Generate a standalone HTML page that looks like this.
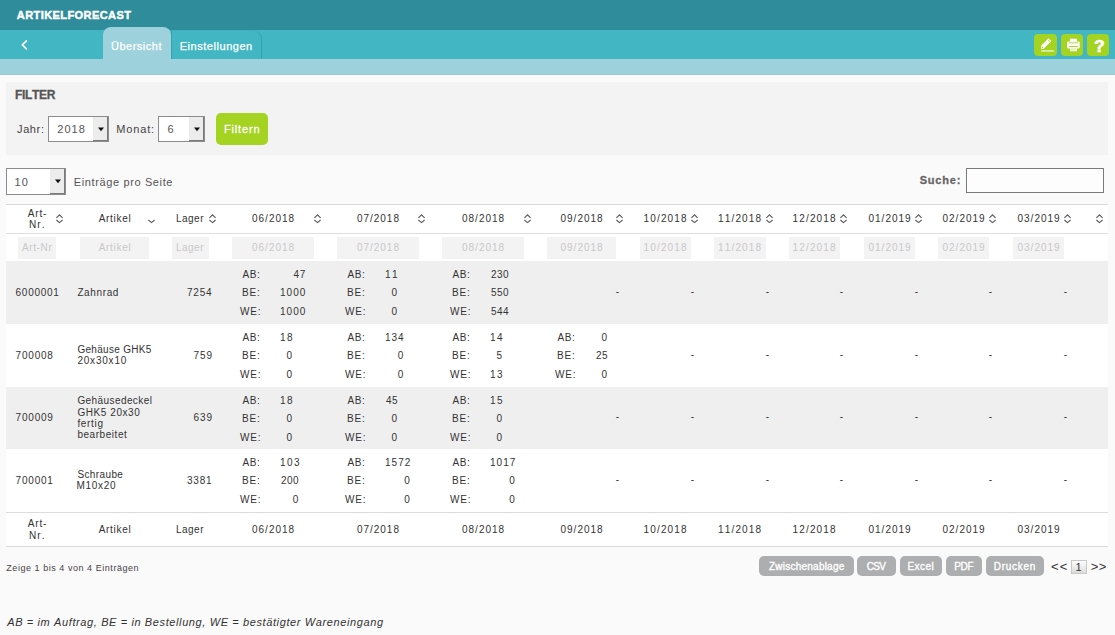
<!DOCTYPE html>
<html><head><meta charset="utf-8"><style>
html,body{margin:0;padding:0}
body{width:1115px;height:635px;overflow:hidden;position:relative;background:#fafafa;font-family:'Liberation Sans', sans-serif}
.t{position:absolute;white-space:pre;line-height:normal;font-kerning:none}
</style></head><body>
<div style="position:absolute;left:0px;top:0px;width:1115px;height:30px;background:#2f8c9a"></div>
<div style="position:absolute;left:0px;top:30px;width:1115px;height:29px;background:#42b6c3"></div>
<div style="position:absolute;left:0px;top:59px;width:1115px;height:16px;background:#9dd1dc"></div>
<div style="position:absolute;left:0px;top:74px;width:1115px;height:1px;background:#93ccd7"></div>
<div style="position:absolute;left:0px;top:75px;width:1115px;height:1px;background:#fff"></div>
<svg style="position:absolute;left:0;top:0" width="60" height="60"><polyline points="26.4,40.9 22.3,44.9 26.4,48.9" fill="none" stroke="#fff" stroke-width="1.6" stroke-linecap="round" stroke-linejoin="round"/></svg>
<div style="position:absolute;left:171px;top:30px;width:91px;height:29px;background:#42b6c3;border:1px solid #38a0ac;border-bottom:none;border-top-color:#3fb0bd;border-radius:0 9px 0 0;box-sizing:border-box"></div>
<div style="position:absolute;left:103px;top:27px;width:68px;height:32px;background:#9dd1dc;border-radius:8px 8px 0 0"></div>
<div style="position:absolute;left:1034px;top:34px;width:23px;height:22px;background:#a4d321;border-radius:4px"></div>
<div style="position:absolute;left:1061px;top:34px;width:22px;height:22px;background:#a4d321;border-radius:4px"></div>
<div style="position:absolute;left:1087px;top:34px;width:22px;height:22px;background:#a4d321;border-radius:4px"></div>
<svg style="position:absolute;left:1034px;top:34px" width="23" height="22"><path d="M7.1,11.8 L14.5,4.3 L17.3,6.9 L9.7,14.7 L7.1,14.9 Z" fill="#fff"/><circle cx="8.4" cy="13.5" r="0.75" fill="#a4d321"/><path d="M14.0,6.0 L15.9,7.7" stroke="#a4d321" stroke-width="0.8"/><rect x="7.1" y="16" width="12.8" height="1.8" fill="#fff" opacity="0.6"/></svg>
<svg style="position:absolute;left:1061px;top:34px" width="22" height="22"><rect x="9.1" y="4.7" width="6.9" height="3.6" fill="#fff"/><rect x="6.2" y="7.4" width="12.5" height="7.2" rx="1" fill="#fff"/><rect x="8.0" y="8.4" width="9" height="0.9" fill="#a4d321"/><rect x="8.2" y="12.0" width="8.6" height="1.0" fill="#a4d321"/><rect x="9.1" y="13.0" width="6.9" height="4.3" fill="#fff"/><rect x="9.8" y="14.2" width="5.5" height="2.4" fill="#a4d321" opacity="0.3"/></svg>
<div style="position:absolute;left:6px;top:82px;width:1102px;height:73px;background:#f3f3f3"></div>
<div style="position:absolute;left:48px;top:116px;width:61px;height:26px;background:#fff;border:1px solid #8c8c8c;box-sizing:border-box"></div>
<div style="position:absolute;left:93px;top:117px;width:15px;height:24px;background:#ececec;border-right:1px solid #7a7a7a;border-bottom:1px solid #7a7a7a;box-sizing:border-box"></div>
<svg style="position:absolute;left:96.5px;top:124.5px" width="8" height="8"><polygon points="1,2.6 7,2.6 4,6.2" fill="#111"/></svg>
<div style="position:absolute;left:158px;top:116px;width:47px;height:26px;background:#fff;border:1px solid #8c8c8c;box-sizing:border-box"></div>
<div style="position:absolute;left:189px;top:117px;width:15px;height:24px;background:#ececec;border-right:1px solid #7a7a7a;border-bottom:1px solid #7a7a7a;box-sizing:border-box"></div>
<svg style="position:absolute;left:192.5px;top:124.5px" width="8" height="8"><polygon points="1,2.6 7,2.6 4,6.2" fill="#111"/></svg>
<div style="position:absolute;left:216px;top:113px;width:52px;height:32px;background:#a4d321;border-radius:5px"></div>
<div style="position:absolute;left:6px;top:168px;width:60px;height:27px;background:#fff;border:1px solid #8c8c8c;box-sizing:border-box"></div>
<div style="position:absolute;left:50px;top:169px;width:15px;height:25px;background:#ececec;border-right:1px solid #7a7a7a;border-bottom:1px solid #7a7a7a;box-sizing:border-box"></div>
<svg style="position:absolute;left:53.5px;top:177.0px" width="8" height="8"><polygon points="1,2.6 7,2.6 4,6.2" fill="#111"/></svg>
<div style="position:absolute;left:966px;top:168px;width:138px;height:24.5px;background:#fdfdfd;border:1px solid #7a7a7a;box-sizing:border-box"></div>
<div style="position:absolute;left:6px;top:204px;width:1102px;height:343px;background:#fff"></div>
<div style="position:absolute;left:6px;top:204px;width:1102px;height:1px;background:#d9d9d9"></div>
<div style="position:absolute;left:6px;top:233px;width:1102px;height:1px;background:#dedede"></div>
<svg style="position:absolute;left:54.5px;top:212px" width="9" height="13"><polyline points="1.4,5.9 4.5,2.9 7.6,5.9" fill="none" stroke="#5a5a5a" stroke-width="1.15"/><polyline points="1.4,8.0 4.5,10.6 7.6,8.0" fill="none" stroke="#5a5a5a" stroke-width="1.15"/></svg>
<div style="position:absolute;left:18px;top:237px;width:38px;height:22px;background:#f3f3f3"></div>
<div style="position:absolute;left:18px;top:237px;width:38px;height:22px;overflow:hidden"></div>
<svg style="position:absolute;left:147.29999999999998px;top:212px" width="9" height="13"><polyline points="1.4,8.0 4.5,10.6 7.6,8.0" fill="none" stroke="#5a5a5a" stroke-width="1.15"/></svg>
<div style="position:absolute;left:80px;top:237px;width:69px;height:22px;background:#f3f3f3"></div>
<div style="position:absolute;left:80px;top:237px;width:69px;height:22px;overflow:hidden"></div>
<svg style="position:absolute;left:207.7px;top:212px" width="9" height="13"><polyline points="1.4,5.9 4.5,2.9 7.6,5.9" fill="none" stroke="#5a5a5a" stroke-width="1.15"/><polyline points="1.4,8.0 4.5,10.6 7.6,8.0" fill="none" stroke="#5a5a5a" stroke-width="1.15"/></svg>
<div style="position:absolute;left:172px;top:237px;width:37px;height:22px;background:#f3f3f3"></div>
<div style="position:absolute;left:172px;top:237px;width:37px;height:22px;overflow:hidden"></div>
<svg style="position:absolute;left:312.7px;top:212px" width="9" height="13"><polyline points="1.4,5.9 4.5,2.9 7.6,5.9" fill="none" stroke="#5a5a5a" stroke-width="1.15"/><polyline points="1.4,8.0 4.5,10.6 7.6,8.0" fill="none" stroke="#5a5a5a" stroke-width="1.15"/></svg>
<div style="position:absolute;left:232px;top:237px;width:82px;height:22px;background:#f3f3f3"></div>
<div style="position:absolute;left:232px;top:237px;width:82px;height:22px;overflow:hidden"></div>
<svg style="position:absolute;left:417.4px;top:212px" width="9" height="13"><polyline points="1.4,5.9 4.5,2.9 7.6,5.9" fill="none" stroke="#5a5a5a" stroke-width="1.15"/><polyline points="1.4,8.0 4.5,10.6 7.6,8.0" fill="none" stroke="#5a5a5a" stroke-width="1.15"/></svg>
<div style="position:absolute;left:337px;top:237px;width:82px;height:22px;background:#f3f3f3"></div>
<div style="position:absolute;left:337px;top:237px;width:82px;height:22px;overflow:hidden"></div>
<svg style="position:absolute;left:522.7px;top:212px" width="9" height="13"><polyline points="1.4,5.9 4.5,2.9 7.6,5.9" fill="none" stroke="#5a5a5a" stroke-width="1.15"/><polyline points="1.4,8.0 4.5,10.6 7.6,8.0" fill="none" stroke="#5a5a5a" stroke-width="1.15"/></svg>
<div style="position:absolute;left:442px;top:237px;width:82px;height:22px;background:#f3f3f3"></div>
<div style="position:absolute;left:442px;top:237px;width:82px;height:22px;overflow:hidden"></div>
<svg style="position:absolute;left:614.7px;top:212px" width="9" height="13"><polyline points="1.4,5.9 4.5,2.9 7.6,5.9" fill="none" stroke="#5a5a5a" stroke-width="1.15"/><polyline points="1.4,8.0 4.5,10.6 7.6,8.0" fill="none" stroke="#5a5a5a" stroke-width="1.15"/></svg>
<div style="position:absolute;left:547px;top:237px;width:69px;height:22px;background:#f3f3f3"></div>
<div style="position:absolute;left:547px;top:237px;width:69px;height:22px;overflow:hidden"></div>
<svg style="position:absolute;left:689.7px;top:212px" width="9" height="13"><polyline points="1.4,5.9 4.5,2.9 7.6,5.9" fill="none" stroke="#5a5a5a" stroke-width="1.15"/><polyline points="1.4,8.0 4.5,10.6 7.6,8.0" fill="none" stroke="#5a5a5a" stroke-width="1.15"/></svg>
<div style="position:absolute;left:640px;top:237px;width:51px;height:22px;background:#f3f3f3"></div>
<div style="position:absolute;left:640px;top:237px;width:51px;height:22px;overflow:hidden"></div>
<svg style="position:absolute;left:764.7px;top:212px" width="9" height="13"><polyline points="1.4,5.9 4.5,2.9 7.6,5.9" fill="none" stroke="#5a5a5a" stroke-width="1.15"/><polyline points="1.4,8.0 4.5,10.6 7.6,8.0" fill="none" stroke="#5a5a5a" stroke-width="1.15"/></svg>
<div style="position:absolute;left:714px;top:237px;width:52px;height:22px;background:#f3f3f3"></div>
<div style="position:absolute;left:714px;top:237px;width:52px;height:22px;overflow:hidden"></div>
<svg style="position:absolute;left:838.7px;top:212px" width="9" height="13"><polyline points="1.4,5.9 4.5,2.9 7.6,5.9" fill="none" stroke="#5a5a5a" stroke-width="1.15"/><polyline points="1.4,8.0 4.5,10.6 7.6,8.0" fill="none" stroke="#5a5a5a" stroke-width="1.15"/></svg>
<div style="position:absolute;left:789px;top:237px;width:51px;height:22px;background:#f3f3f3"></div>
<div style="position:absolute;left:789px;top:237px;width:51px;height:22px;overflow:hidden"></div>
<svg style="position:absolute;left:913.7px;top:212px" width="9" height="13"><polyline points="1.4,5.9 4.5,2.9 7.6,5.9" fill="none" stroke="#5a5a5a" stroke-width="1.15"/><polyline points="1.4,8.0 4.5,10.6 7.6,8.0" fill="none" stroke="#5a5a5a" stroke-width="1.15"/></svg>
<div style="position:absolute;left:864px;top:237px;width:51px;height:22px;background:#f3f3f3"></div>
<div style="position:absolute;left:864px;top:237px;width:51px;height:22px;overflow:hidden"></div>
<svg style="position:absolute;left:987.7px;top:212px" width="9" height="13"><polyline points="1.4,5.9 4.5,2.9 7.6,5.9" fill="none" stroke="#5a5a5a" stroke-width="1.15"/><polyline points="1.4,8.0 4.5,10.6 7.6,8.0" fill="none" stroke="#5a5a5a" stroke-width="1.15"/></svg>
<div style="position:absolute;left:938px;top:237px;width:51px;height:22px;background:#f3f3f3"></div>
<div style="position:absolute;left:938px;top:237px;width:51px;height:22px;overflow:hidden"></div>
<svg style="position:absolute;left:1062.7px;top:212px" width="9" height="13"><polyline points="1.4,5.9 4.5,2.9 7.6,5.9" fill="none" stroke="#5a5a5a" stroke-width="1.15"/><polyline points="1.4,8.0 4.5,10.6 7.6,8.0" fill="none" stroke="#5a5a5a" stroke-width="1.15"/></svg>
<div style="position:absolute;left:1013px;top:237px;width:51px;height:22px;background:#f3f3f3"></div>
<div style="position:absolute;left:1013px;top:237px;width:51px;height:22px;overflow:hidden"></div>
<svg style="position:absolute;left:1094.7px;top:212px" width="9" height="13"><polyline points="1.4,5.9 4.5,2.9 7.6,5.9" fill="none" stroke="#5a5a5a" stroke-width="1.15"/><polyline points="1.4,8.0 4.5,10.6 7.6,8.0" fill="none" stroke="#5a5a5a" stroke-width="1.15"/></svg>
<div style="position:absolute;left:6px;top:261px;width:1102px;height:63px;background:#efefef"></div>
<div style="position:absolute;left:6px;top:387px;width:1102px;height:62px;background:#efefef"></div>
<div style="position:absolute;left:6px;top:512px;width:1102px;height:1px;background:#dcdcdc"></div>
<div style="position:absolute;left:6px;top:546px;width:1102px;height:1px;background:#dcdcdc"></div>
<div style="position:absolute;left:759px;top:556px;width:95px;height:20px;background:#adaeaf;border-radius:5px"></div>
<div style="position:absolute;left:857px;top:556px;width:39px;height:20px;background:#adaeaf;border-radius:5px"></div>
<div style="position:absolute;left:899.6px;top:556px;width:42.39999999999998px;height:20px;background:#adaeaf;border-radius:5px"></div>
<div style="position:absolute;left:946.4px;top:556px;width:36.0px;height:20px;background:#adaeaf;border-radius:5px"></div>
<div style="position:absolute;left:986.3px;top:556px;width:57.299999999999955px;height:20px;background:#adaeaf;border-radius:5px"></div>
<div style="position:absolute;left:1071px;top:560px;width:16px;height:14px;background:linear-gradient(#fdfdfd,#dcdcdc);border:1px solid #c8c8c8;box-sizing:border-box"></div>
<div class="t" style="left:16.80px;top:8.70px;font-size:11px;letter-spacing:0.429px;color:#fff;font-weight:700;-webkit-text-stroke:0.45px #fff">ARTIKELFORECAST</div>
<div class="t" style="left:111.00px;top:40.00px;font-size:11px;letter-spacing:0.500px;color:#fff;-webkit-text-stroke:0.25px #fff">Übersicht</div>
<div class="t" style="left:179.70px;top:39.80px;font-size:11px;letter-spacing:0.542px;color:#fff;-webkit-text-stroke:0.25px #fff">Einstellungen</div>
<div class="t" style="left:1094.20px;top:36.70px;font-size:17px;letter-spacing:0.000px;color:#fff;font-weight:700;-webkit-text-stroke:0.7px #fff">?</div>
<div class="t" style="left:14.90px;top:88.00px;font-size:12px;letter-spacing:-0.300px;color:#555;font-weight:700;-webkit-text-stroke:0.3px #555">FILTER</div>
<div class="t" style="left:17.00px;top:122.70px;font-size:11px;letter-spacing:0.625px;color:#444">Jahr:</div>
<div class="t" style="left:116.30px;top:122.70px;font-size:11px;letter-spacing:0.840px;color:#444">Monat:</div>
<div class="t" style="left:57.30px;top:122.70px;font-size:11px;letter-spacing:1.000px;color:#555">2018</div>
<div class="t" style="left:167.60px;top:122.70px;font-size:11px;letter-spacing:0.000px;color:#555">6</div>
<div class="t" style="left:224.00px;top:123.00px;font-size:11px;letter-spacing:0.833px;color:#fff;-webkit-text-stroke:0.3px #fff">Filtern</div>
<div class="t" style="left:14.60px;top:176.00px;font-size:11px;letter-spacing:1.000px;color:#555">10</div>
<div class="t" style="left:73.80px;top:176.00px;font-size:11px;letter-spacing:0.624px;color:#555">Einträge pro Seite</div>
<div class="t" style="left:919.70px;top:174.10px;font-size:11px;letter-spacing:0.800px;color:#666;font-weight:700;-webkit-text-stroke:0.3px #666">Suche:</div>
<div class="t" style="left:27.78px;top:208.00px;font-size:10px;letter-spacing:0.813px;color:#333">Art-</div>
<div class="t" style="left:28.91px;top:218.80px;font-size:10px;letter-spacing:1.088px;color:#333">Nr.</div>
<div class="t" style="left:27.78px;top:517.90px;font-size:10px;letter-spacing:0.813px;color:#333">Art-</div>
<div class="t" style="left:28.91px;top:529.70px;font-size:10px;letter-spacing:1.088px;color:#333">Nr.</div>
<div class="t" style="left:21.91px;top:241.60px;font-size:10px;letter-spacing:0.635px;color:#c8c8c8">Art-Nr</div>
<div class="t" style="left:98.77px;top:213.00px;font-size:10px;letter-spacing:0.676px;color:#333">Artikel</div>
<div class="t" style="left:98.77px;top:523.80px;font-size:10px;letter-spacing:0.676px;color:#333">Artikel</div>
<div class="t" style="left:98.77px;top:241.60px;font-size:10px;letter-spacing:0.676px;color:#c8c8c8">Artikel</div>
<div class="t" style="left:176.09px;top:213.00px;font-size:10px;letter-spacing:0.453px;color:#333">Lager</div>
<div class="t" style="left:176.09px;top:523.80px;font-size:10px;letter-spacing:0.453px;color:#333">Lager</div>
<div class="t" style="left:176.09px;top:241.60px;font-size:10px;letter-spacing:0.453px;color:#c8c8c8">Lager</div>
<div class="t" style="left:252.03px;top:213.00px;font-size:10px;letter-spacing:0.991px;color:#333">06/2018</div>
<div class="t" style="left:252.03px;top:523.80px;font-size:10px;letter-spacing:0.991px;color:#333">06/2018</div>
<div class="t" style="left:252.03px;top:241.60px;font-size:10px;letter-spacing:0.991px;color:#c8c8c8">06/2018</div>
<div class="t" style="left:356.88px;top:213.00px;font-size:10px;letter-spacing:0.991px;color:#333">07/2018</div>
<div class="t" style="left:356.88px;top:523.80px;font-size:10px;letter-spacing:0.991px;color:#333">07/2018</div>
<div class="t" style="left:356.88px;top:241.60px;font-size:10px;letter-spacing:0.991px;color:#c8c8c8">07/2018</div>
<div class="t" style="left:462.03px;top:213.00px;font-size:10px;letter-spacing:0.991px;color:#333">08/2018</div>
<div class="t" style="left:462.03px;top:523.80px;font-size:10px;letter-spacing:0.991px;color:#333">08/2018</div>
<div class="t" style="left:462.03px;top:241.60px;font-size:10px;letter-spacing:0.991px;color:#c8c8c8">08/2018</div>
<div class="t" style="left:560.53px;top:213.00px;font-size:10px;letter-spacing:0.991px;color:#333">09/2018</div>
<div class="t" style="left:560.53px;top:523.80px;font-size:10px;letter-spacing:0.991px;color:#333">09/2018</div>
<div class="t" style="left:560.53px;top:241.60px;font-size:10px;letter-spacing:0.991px;color:#c8c8c8">09/2018</div>
<div class="t" style="left:643.53px;top:213.00px;font-size:10px;letter-spacing:1.157px;color:#333">10/2018</div>
<div class="t" style="left:643.53px;top:523.80px;font-size:10px;letter-spacing:1.157px;color:#333">10/2018</div>
<div class="t" style="left:643.53px;top:241.60px;font-size:10px;letter-spacing:1.157px;color:#c8c8c8">10/2018</div>
<div class="t" style="left:718.03px;top:213.00px;font-size:10px;letter-spacing:1.157px;color:#333">11/2018</div>
<div class="t" style="left:718.03px;top:523.80px;font-size:10px;letter-spacing:1.157px;color:#333">11/2018</div>
<div class="t" style="left:718.03px;top:241.60px;font-size:10px;letter-spacing:1.157px;color:#c8c8c8">11/2018</div>
<div class="t" style="left:792.53px;top:213.00px;font-size:10px;letter-spacing:1.157px;color:#333">12/2018</div>
<div class="t" style="left:792.53px;top:523.80px;font-size:10px;letter-spacing:1.157px;color:#333">12/2018</div>
<div class="t" style="left:792.53px;top:241.60px;font-size:10px;letter-spacing:1.157px;color:#c8c8c8">12/2018</div>
<div class="t" style="left:868.53px;top:213.00px;font-size:10px;letter-spacing:0.991px;color:#333">01/2019</div>
<div class="t" style="left:868.53px;top:523.80px;font-size:10px;letter-spacing:0.991px;color:#333">01/2019</div>
<div class="t" style="left:868.53px;top:241.60px;font-size:10px;letter-spacing:0.991px;color:#c8c8c8">01/2019</div>
<div class="t" style="left:942.53px;top:213.00px;font-size:10px;letter-spacing:0.991px;color:#333">02/2019</div>
<div class="t" style="left:942.53px;top:523.80px;font-size:10px;letter-spacing:0.991px;color:#333">02/2019</div>
<div class="t" style="left:942.53px;top:241.60px;font-size:10px;letter-spacing:0.991px;color:#c8c8c8">02/2019</div>
<div class="t" style="left:1017.53px;top:213.00px;font-size:10px;letter-spacing:0.991px;color:#333">03/2019</div>
<div class="t" style="left:1017.53px;top:523.80px;font-size:10px;letter-spacing:0.991px;color:#333">03/2019</div>
<div class="t" style="left:1017.53px;top:241.60px;font-size:10px;letter-spacing:0.991px;color:#c8c8c8">03/2019</div>
<div class="t" style="left:15.60px;top:286.60px;font-size:10px;letter-spacing:0.717px;color:#333">6000001</div>
<div class="t" style="left:77.40px;top:286.60px;font-size:10px;letter-spacing:0.623px;color:#333">Zahnrad</div>
<div class="t" style="left:187.07px;top:286.60px;font-size:10px;letter-spacing:0.743px;color:#333">7254</div>
<div class="t" style="left:242.56px;top:269.00px;font-size:10px;letter-spacing:0.521px;color:#333">AB:</div>
<div class="t" style="left:293.61px;top:269.00px;font-size:10px;letter-spacing:0.515px;color:#333">47</div>
<div class="t" style="left:242.08px;top:287.30px;font-size:10px;letter-spacing:0.760px;color:#333">BE:</div>
<div class="t" style="left:279.90px;top:287.30px;font-size:10px;letter-spacing:1.077px;color:#333">1000</div>
<div class="t" style="left:240.05px;top:305.60px;font-size:10px;letter-spacing:0.774px;color:#333">WE:</div>
<div class="t" style="left:279.90px;top:305.60px;font-size:10px;letter-spacing:1.077px;color:#333">1000</div>
<div class="t" style="left:347.56px;top:269.00px;font-size:10px;letter-spacing:0.521px;color:#333">AB:</div>
<div class="t" style="left:384.90px;top:269.00px;font-size:10px;letter-spacing:1.515px;color:#333">11</div>
<div class="t" style="left:347.08px;top:287.30px;font-size:10px;letter-spacing:0.760px;color:#333">BE:</div>
<div class="t" style="left:391.41px;top:287.30px;font-size:10px;letter-spacing:0.000px;color:#333">0</div>
<div class="t" style="left:345.05px;top:305.60px;font-size:10px;letter-spacing:0.774px;color:#333">WE:</div>
<div class="t" style="left:391.41px;top:305.60px;font-size:10px;letter-spacing:0.000px;color:#333">0</div>
<div class="t" style="left:452.56px;top:269.00px;font-size:10px;letter-spacing:0.521px;color:#333">AB:</div>
<div class="t" style="left:490.90px;top:269.00px;font-size:10px;letter-spacing:0.436px;color:#333">230</div>
<div class="t" style="left:452.08px;top:287.30px;font-size:10px;letter-spacing:0.760px;color:#333">BE:</div>
<div class="t" style="left:490.90px;top:287.30px;font-size:10px;letter-spacing:0.436px;color:#333">550</div>
<div class="t" style="left:450.05px;top:305.60px;font-size:10px;letter-spacing:0.774px;color:#333">WE:</div>
<div class="t" style="left:490.90px;top:305.60px;font-size:10px;letter-spacing:0.436px;color:#333">544</div>
<div class="t" style="left:615.80px;top:285.60px;font-size:10px;letter-spacing:0.000px;color:#333">-</div>
<div class="t" style="left:690.80px;top:285.60px;font-size:10px;letter-spacing:0.000px;color:#333">-</div>
<div class="t" style="left:765.80px;top:285.60px;font-size:10px;letter-spacing:0.000px;color:#333">-</div>
<div class="t" style="left:839.80px;top:285.60px;font-size:10px;letter-spacing:0.000px;color:#333">-</div>
<div class="t" style="left:914.80px;top:285.60px;font-size:10px;letter-spacing:0.000px;color:#333">-</div>
<div class="t" style="left:988.80px;top:285.60px;font-size:10px;letter-spacing:0.000px;color:#333">-</div>
<div class="t" style="left:1063.80px;top:285.60px;font-size:10px;letter-spacing:0.000px;color:#333">-</div>
<div class="t" style="left:15.60px;top:349.60px;font-size:10px;letter-spacing:0.789px;color:#333">700008</div>
<div class="t" style="left:77.40px;top:344.05px;font-size:10px;letter-spacing:0.304px;color:#333">Gehäuse GHK5</div>
<div class="t" style="left:77.40px;top:355.15px;font-size:10px;letter-spacing:0.790px;color:#333">20x30x10</div>
<div class="t" style="left:193.43px;top:349.60px;font-size:10px;letter-spacing:0.936px;color:#333">759</div>
<div class="t" style="left:242.56px;top:332.00px;font-size:10px;letter-spacing:0.521px;color:#333">AB:</div>
<div class="t" style="left:279.90px;top:332.00px;font-size:10px;letter-spacing:1.515px;color:#333">18</div>
<div class="t" style="left:242.08px;top:350.30px;font-size:10px;letter-spacing:0.760px;color:#333">BE:</div>
<div class="t" style="left:286.41px;top:350.30px;font-size:10px;letter-spacing:0.000px;color:#333">0</div>
<div class="t" style="left:240.05px;top:368.60px;font-size:10px;letter-spacing:0.774px;color:#333">WE:</div>
<div class="t" style="left:286.41px;top:368.60px;font-size:10px;letter-spacing:0.000px;color:#333">0</div>
<div class="t" style="left:347.56px;top:332.00px;font-size:10px;letter-spacing:0.521px;color:#333">AB:</div>
<div class="t" style="left:384.90px;top:332.00px;font-size:10px;letter-spacing:0.936px;color:#333">134</div>
<div class="t" style="left:347.08px;top:350.30px;font-size:10px;letter-spacing:0.760px;color:#333">BE:</div>
<div class="t" style="left:397.77px;top:350.30px;font-size:10px;letter-spacing:0.000px;color:#333">0</div>
<div class="t" style="left:345.05px;top:368.60px;font-size:10px;letter-spacing:0.774px;color:#333">WE:</div>
<div class="t" style="left:397.77px;top:368.60px;font-size:10px;letter-spacing:0.000px;color:#333">0</div>
<div class="t" style="left:452.56px;top:332.00px;font-size:10px;letter-spacing:0.521px;color:#333">AB:</div>
<div class="t" style="left:489.90px;top:332.00px;font-size:10px;letter-spacing:1.515px;color:#333">14</div>
<div class="t" style="left:452.08px;top:350.30px;font-size:10px;letter-spacing:0.760px;color:#333">BE:</div>
<div class="t" style="left:496.41px;top:350.30px;font-size:10px;letter-spacing:0.000px;color:#333">5</div>
<div class="t" style="left:450.05px;top:368.60px;font-size:10px;letter-spacing:0.774px;color:#333">WE:</div>
<div class="t" style="left:489.90px;top:368.60px;font-size:10px;letter-spacing:1.515px;color:#333">13</div>
<div class="t" style="left:557.56px;top:332.00px;font-size:10px;letter-spacing:0.521px;color:#333">AB:</div>
<div class="t" style="left:601.41px;top:332.00px;font-size:10px;letter-spacing:0.000px;color:#333">0</div>
<div class="t" style="left:557.08px;top:350.30px;font-size:10px;letter-spacing:0.760px;color:#333">BE:</div>
<div class="t" style="left:595.90px;top:350.30px;font-size:10px;letter-spacing:0.515px;color:#333">25</div>
<div class="t" style="left:555.05px;top:368.60px;font-size:10px;letter-spacing:0.774px;color:#333">WE:</div>
<div class="t" style="left:601.41px;top:368.60px;font-size:10px;letter-spacing:0.000px;color:#333">0</div>
<div class="t" style="left:690.80px;top:348.60px;font-size:10px;letter-spacing:0.000px;color:#333">-</div>
<div class="t" style="left:765.80px;top:348.60px;font-size:10px;letter-spacing:0.000px;color:#333">-</div>
<div class="t" style="left:839.80px;top:348.60px;font-size:10px;letter-spacing:0.000px;color:#333">-</div>
<div class="t" style="left:914.80px;top:348.60px;font-size:10px;letter-spacing:0.000px;color:#333">-</div>
<div class="t" style="left:988.80px;top:348.60px;font-size:10px;letter-spacing:0.000px;color:#333">-</div>
<div class="t" style="left:1063.80px;top:348.60px;font-size:10px;letter-spacing:0.000px;color:#333">-</div>
<div class="t" style="left:15.60px;top:412.10px;font-size:10px;letter-spacing:0.789px;color:#333">700009</div>
<div class="t" style="left:77.40px;top:395.45px;font-size:10px;letter-spacing:0.418px;color:#333">Gehäusedeckel</div>
<div class="t" style="left:77.40px;top:406.55px;font-size:10px;letter-spacing:0.571px;color:#333">GHK5 20x30</div>
<div class="t" style="left:77.40px;top:417.65px;font-size:10px;letter-spacing:0.679px;color:#333">fertig</div>
<div class="t" style="left:77.40px;top:428.75px;font-size:10px;letter-spacing:0.545px;color:#333">bearbeitet</div>
<div class="t" style="left:193.43px;top:412.10px;font-size:10px;letter-spacing:0.936px;color:#333">639</div>
<div class="t" style="left:242.56px;top:395.00px;font-size:10px;letter-spacing:0.521px;color:#333">AB:</div>
<div class="t" style="left:279.90px;top:395.00px;font-size:10px;letter-spacing:1.515px;color:#333">18</div>
<div class="t" style="left:242.08px;top:413.30px;font-size:10px;letter-spacing:0.760px;color:#333">BE:</div>
<div class="t" style="left:286.41px;top:413.30px;font-size:10px;letter-spacing:0.000px;color:#333">0</div>
<div class="t" style="left:240.05px;top:431.60px;font-size:10px;letter-spacing:0.774px;color:#333">WE:</div>
<div class="t" style="left:286.41px;top:431.60px;font-size:10px;letter-spacing:0.000px;color:#333">0</div>
<div class="t" style="left:347.56px;top:395.00px;font-size:10px;letter-spacing:0.521px;color:#333">AB:</div>
<div class="t" style="left:385.90px;top:395.00px;font-size:10px;letter-spacing:0.515px;color:#333">45</div>
<div class="t" style="left:347.08px;top:413.30px;font-size:10px;letter-spacing:0.760px;color:#333">BE:</div>
<div class="t" style="left:391.41px;top:413.30px;font-size:10px;letter-spacing:0.000px;color:#333">0</div>
<div class="t" style="left:345.05px;top:431.60px;font-size:10px;letter-spacing:0.774px;color:#333">WE:</div>
<div class="t" style="left:391.41px;top:431.60px;font-size:10px;letter-spacing:0.000px;color:#333">0</div>
<div class="t" style="left:452.56px;top:395.00px;font-size:10px;letter-spacing:0.521px;color:#333">AB:</div>
<div class="t" style="left:489.90px;top:395.00px;font-size:10px;letter-spacing:1.515px;color:#333">15</div>
<div class="t" style="left:452.08px;top:413.30px;font-size:10px;letter-spacing:0.760px;color:#333">BE:</div>
<div class="t" style="left:496.41px;top:413.30px;font-size:10px;letter-spacing:0.000px;color:#333">0</div>
<div class="t" style="left:450.05px;top:431.60px;font-size:10px;letter-spacing:0.774px;color:#333">WE:</div>
<div class="t" style="left:496.41px;top:431.60px;font-size:10px;letter-spacing:0.000px;color:#333">0</div>
<div class="t" style="left:615.80px;top:411.10px;font-size:10px;letter-spacing:0.000px;color:#333">-</div>
<div class="t" style="left:690.80px;top:411.10px;font-size:10px;letter-spacing:0.000px;color:#333">-</div>
<div class="t" style="left:765.80px;top:411.10px;font-size:10px;letter-spacing:0.000px;color:#333">-</div>
<div class="t" style="left:839.80px;top:411.10px;font-size:10px;letter-spacing:0.000px;color:#333">-</div>
<div class="t" style="left:914.80px;top:411.10px;font-size:10px;letter-spacing:0.000px;color:#333">-</div>
<div class="t" style="left:988.80px;top:411.10px;font-size:10px;letter-spacing:0.000px;color:#333">-</div>
<div class="t" style="left:1063.80px;top:411.10px;font-size:10px;letter-spacing:0.000px;color:#333">-</div>
<div class="t" style="left:15.60px;top:474.60px;font-size:10px;letter-spacing:0.789px;color:#333">700001</div>
<div class="t" style="left:77.40px;top:469.05px;font-size:10px;letter-spacing:0.386px;color:#333">Schraube</div>
<div class="t" style="left:76.40px;top:480.15px;font-size:10px;letter-spacing:0.700px;color:#333">M10x20</div>
<div class="t" style="left:187.07px;top:474.60px;font-size:10px;letter-spacing:0.743px;color:#333">3381</div>
<div class="t" style="left:242.56px;top:457.00px;font-size:10px;letter-spacing:0.521px;color:#333">AB:</div>
<div class="t" style="left:279.90px;top:457.00px;font-size:10px;letter-spacing:1.436px;color:#333">103</div>
<div class="t" style="left:242.08px;top:475.30px;font-size:10px;letter-spacing:0.760px;color:#333">BE:</div>
<div class="t" style="left:280.90px;top:475.30px;font-size:10px;letter-spacing:0.436px;color:#333">200</div>
<div class="t" style="left:240.05px;top:493.60px;font-size:10px;letter-spacing:0.774px;color:#333">WE:</div>
<div class="t" style="left:292.77px;top:493.60px;font-size:10px;letter-spacing:0.000px;color:#333">0</div>
<div class="t" style="left:347.56px;top:457.00px;font-size:10px;letter-spacing:0.521px;color:#333">AB:</div>
<div class="t" style="left:384.90px;top:457.00px;font-size:10px;letter-spacing:1.077px;color:#333">1572</div>
<div class="t" style="left:347.08px;top:475.30px;font-size:10px;letter-spacing:0.760px;color:#333">BE:</div>
<div class="t" style="left:404.13px;top:475.30px;font-size:10px;letter-spacing:0.000px;color:#333">0</div>
<div class="t" style="left:345.05px;top:493.60px;font-size:10px;letter-spacing:0.774px;color:#333">WE:</div>
<div class="t" style="left:404.13px;top:493.60px;font-size:10px;letter-spacing:0.000px;color:#333">0</div>
<div class="t" style="left:452.56px;top:457.00px;font-size:10px;letter-spacing:0.521px;color:#333">AB:</div>
<div class="t" style="left:489.90px;top:457.00px;font-size:10px;letter-spacing:1.077px;color:#333">1017</div>
<div class="t" style="left:452.08px;top:475.30px;font-size:10px;letter-spacing:0.760px;color:#333">BE:</div>
<div class="t" style="left:509.13px;top:475.30px;font-size:10px;letter-spacing:0.000px;color:#333">0</div>
<div class="t" style="left:450.05px;top:493.60px;font-size:10px;letter-spacing:0.774px;color:#333">WE:</div>
<div class="t" style="left:509.13px;top:493.60px;font-size:10px;letter-spacing:0.000px;color:#333">0</div>
<div class="t" style="left:615.80px;top:473.60px;font-size:10px;letter-spacing:0.000px;color:#333">-</div>
<div class="t" style="left:690.80px;top:473.60px;font-size:10px;letter-spacing:0.000px;color:#333">-</div>
<div class="t" style="left:765.80px;top:473.60px;font-size:10px;letter-spacing:0.000px;color:#333">-</div>
<div class="t" style="left:839.80px;top:473.60px;font-size:10px;letter-spacing:0.000px;color:#333">-</div>
<div class="t" style="left:914.80px;top:473.60px;font-size:10px;letter-spacing:0.000px;color:#333">-</div>
<div class="t" style="left:988.80px;top:473.60px;font-size:10px;letter-spacing:0.000px;color:#333">-</div>
<div class="t" style="left:1063.80px;top:473.60px;font-size:10px;letter-spacing:0.000px;color:#333">-</div>
<div class="t" style="left:6.30px;top:562.50px;font-size:9px;letter-spacing:0.543px;color:#444">Zeige 1 bis 4 von 4 Einträgen</div>
<div class="t" style="left:769.00px;top:561.00px;font-size:10px;letter-spacing:0.231px;color:#fff;-webkit-text-stroke:0.35px #fff">Zwischenablage</div>
<div class="t" style="left:866.70px;top:561.00px;font-size:10px;letter-spacing:-0.700px;color:#fff;-webkit-text-stroke:0.35px #fff">CSV</div>
<div class="t" style="left:907.42px;top:561.00px;font-size:10px;letter-spacing:0.442px;color:#fff;-webkit-text-stroke:0.35px #fff">Excel</div>
<div class="t" style="left:954.25px;top:561.00px;font-size:10px;letter-spacing:-0.354px;color:#fff;-webkit-text-stroke:0.35px #fff">PDF</div>
<div class="t" style="left:993.80px;top:561.00px;font-size:10px;letter-spacing:0.716px;color:#fff;-webkit-text-stroke:0.35px #fff">Drucken</div>
<div class="t" style="left:1051.00px;top:558.50px;font-size:13px;letter-spacing:1.200px;color:#333">&lt;&lt;</div>
<div class="t" style="left:1075.50px;top:561.00px;font-size:11px;letter-spacing:0.000px;color:#333">1</div>
<div class="t" style="left:1090.80px;top:558.50px;font-size:13px;letter-spacing:0.400px;color:#333">&gt;&gt;</div>
<div class="t" style="left:7.30px;top:616.00px;font-size:11px;letter-spacing:0.611px;color:#333;font-style:italic">AB = im Auftrag, BE = in Bestellung, WE = bestätigter Wareneingang</div>

</body></html>
